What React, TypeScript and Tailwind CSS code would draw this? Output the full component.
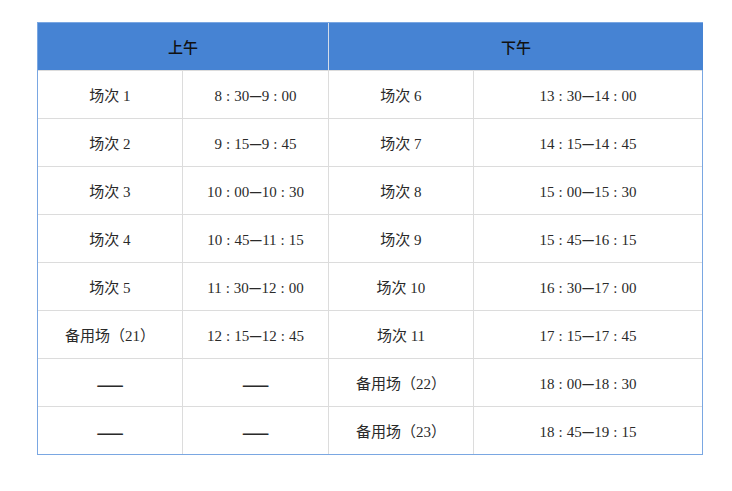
import React from 'react';

const serif = { fontFamily: '"Liberation Serif", "Noto Sans CJK SC", serif' };

type Row = [string, string, string, string];

const rows: Row[] = [
  ['场次 1', '8:30—9:00', '场次 6', '13:30—14:00'],
  ['场次 2', '9:15—9:45', '场次 7', '14:15—14:45'],
  ['场次 3', '10:00—10:30', '场次 8', '15:00—15:30'],
  ['场次 4', '10:45—11:15', '场次 9', '15:45—16:15'],
  ['场次 5', '11:30—12:00', '场次 10', '16:30—17:00'],
  ['备用场（21）', '12:15—12:45', '场次 11', '17:15—17:45'],
  ['——', '——', '备用场（22）', '18:00—18:30'],
  ['——', '——', '备用场（23）', '18:45—19:15'],
];

// split a time like 8:30—9:00 so the dash uses the heavy CJK glyph
const Time: React.FC<{ value: string }> = ({ value }) => {
  if (value === '——') return <Dashes />;
  const [a, b] = value.split('—');
  const part = (t: string) => {
    const [h, m] = t.split(':');
    return (
      <>
        {h}
        <span className="px-[4px]">:</span>
        {m}
      </>
    );
  };
  return (
    <span>
      {part(a)}
      <span className="font-['Noto_Sans_CJK_SC'] font-bold text-[14px]">—</span>
      {part(b)}
    </span>
  );
};

const Dashes = () => <span className="font-['Noto_Sans_CJK_SC'] font-bold text-[16px]">——</span>;

const Cell: React.FC<{ children: React.ReactNode }> = ({ children }) => (
  <div className="bg-white h-[47px] pt-[3px] flex items-center justify-center text-[15px] text-[#2a2a2a]" style={serif}>
    {children}
  </div>
);

export default function App() {
  return (
    <div className="w-[732px] h-[491px] bg-white pt-[22px] pl-[37px]">
      <div className="w-[666px] border border-[#7aa7e2] bg-[#dcdcdc]">
        <div className="grid grid-cols-[290px_374px] gap-px bg-[#d3dcea]">
          <div className="h-[47px] pt-[1px] bg-[#4683d3] flex items-center justify-center text-[15px] font-medium text-[#111] font-['Noto_Sans_CJK_SC']">
            上午
          </div>
          <div className="h-[47px] pt-[1px] bg-[#4683d3] flex items-center justify-center text-[15px] font-medium text-[#111] font-['Noto_Sans_CJK_SC']">
            下午
          </div>
        </div>
        <div className="grid grid-cols-[144px_145px_144px_228px] gap-px mt-px">
          {rows.map((r, i) => (
            <React.Fragment key={i}>
              <Cell>{r[0] === '——' ? <Dashes /> : r[0]}</Cell>
              <Cell><Time value={r[1]} /></Cell>
              <Cell>{r[2]}</Cell>
              <Cell><Time value={r[3]} /></Cell>
            </React.Fragment>
          ))}
        </div>
      </div>
    </div>
  );
}
